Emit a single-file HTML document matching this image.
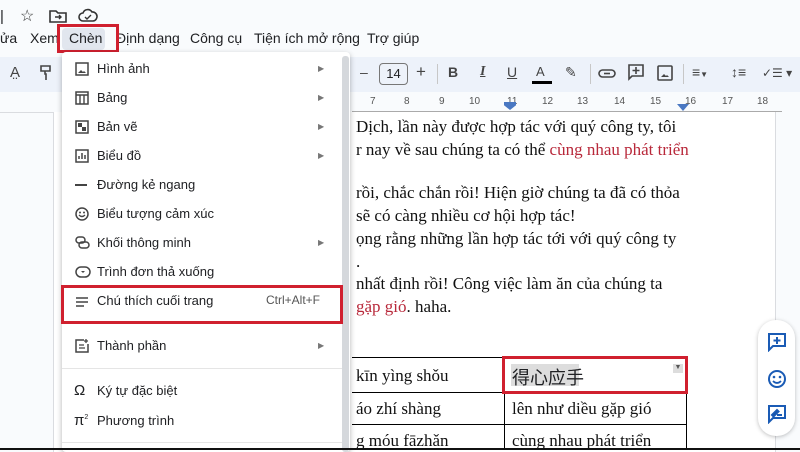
<!DOCTYPE html>
<html><head><meta charset="utf-8"><style>
*{margin:0;padding:0;box-sizing:border-box}
body{width:800px;height:450px;overflow:hidden;position:relative;background:#f9fbfd;font-family:"Liberation Sans",sans-serif;color:#202124}
.a{position:absolute}
.top{left:0;top:0;width:800px;height:57px;background:#f9fbfd}
.tb{left:0;top:57px;width:800px;height:35px;background:#edf2fa}
.menu{font-size:14px;top:30px;color:#202124}
.page{left:53px;top:112px;width:723px;height:340px;background:#fff;border-left:1px solid #dadce0;border-right:1px solid #dadce0}
.doc{font-family:"Liberation Serif",serif;font-size:17px;color:#111;left:356px;white-space:nowrap}
.red{color:#b8283a}
.dd{left:62px;top:52px;width:288px;height:400px;background:#fff;box-shadow:0 2px 6px rgba(0,0,0,.3);border-radius:4px}
.it{position:absolute;left:35px;font-size:13px;color:#202124}
.ic{position:absolute;left:13px;width:14px;height:14px}
.arr{position:absolute;left:256px;font-size:8px;color:#777}
.sep{position:absolute;left:0;width:280px;height:1px;background:#e5e5e5}
.rb{position:absolute;border:3px solid #d0202f}
.tbi{position:absolute;top:64px;font-size:14px;color:#444;font-weight:bold}
.rul{left:352px;top:98px;width:430px;height:14px;font-size:10px;color:#555}
</style></head><body>
<div class="a top"></div>
<div class="a" style="left:0;top:8px;font-size:15px">|</div>
<div class="a" style="left:20px;top:6px;font-size:16px;color:#333">☆</div>
<svg class="a" style="left:49px;top:9px" width="18" height="14"><path d="M1 2h6l2 2h8v9H1z" fill="none" stroke="#333" stroke-width="1.6"/><path d="M6 8h6M10 6l2 2-2 2" fill="none" stroke="#333" stroke-width="1.4"/></svg>
<svg class="a" style="left:78px;top:8px" width="20" height="15"><path d="M5 13a4 4 0 010-8 5 5 0 019-1 4 4 0 011 9z" fill="none" stroke="#333" stroke-width="1.6"/><path d="M7 9l2 2 4-4" fill="none" stroke="#333" stroke-width="1.4"/></svg>
<div class="a menu" style="left:0">ửa</div>
<div class="a menu" style="left:30px">Xem</div>
<div class="a" style="left:62px;top:28px;width:43px;height:22px;background:#e1e6ee;border-radius:4px"></div>
<div class="a menu" style="left:69px">Chèn</div>
<div class="a menu" style="left:116px">Định dạng</div>
<div class="a menu" style="left:190px">Công cụ</div>
<div class="a menu" style="left:254px">Tiện ích mở rộng</div>
<div class="a menu" style="left:367px">Trợ giúp</div>
<div class="rb" style="left:57px;top:24px;width:62px;height:29px"></div>
<div class="a tb"></div>
<div class="a" style="left:10px;top:64px;font-size:15px;color:#444">A̤</div>
<svg class="a" style="left:39px;top:64px" width="14" height="18"><path d="M2 2h9v5H2zM6 7v3h1v6" fill="none" stroke="#444" stroke-width="1.6"/></svg>
<div class="a page"></div>
<div class="a" style="left:0;top:112px;width:53px;height:1px;background:#dadce0"></div>
<div class="tbi" style="left:360px;font-weight:normal">–</div>
<div class="a" style="left:379px;top:63px;width:29px;height:22px;border:1px solid #777;border-radius:4px;font-size:13px;text-align:center;line-height:20px">14</div>
<div class="tbi" style="left:416px;font-weight:normal;font-size:17px;top:62px">+</div>
<div class="a" style="left:437px;top:64px;width:1px;height:20px;background:#c7c7c7"></div>
<div class="tbi" style="left:448px">B</div>
<div class="tbi" style="left:480px;font-style:italic;text-decoration:underline;font-family:'Liberation Serif'">I</div>
<div class="tbi" style="left:507px;font-weight:normal;text-decoration:underline">U</div>
<div class="tbi" style="left:536px;font-weight:normal;font-size:13px">A</div>
<div class="a" style="left:532px;top:81px;width:20px;height:3px;background:#000"></div>
<div class="tbi" style="left:565px;font-weight:normal">✎</div>
<div class="a" style="left:590px;top:64px;width:1px;height:20px;background:#c7c7c7"></div>
<svg class="a" style="left:598px;top:66px" width="18" height="14"><rect x="1" y="4" width="16" height="7" rx="3.5" fill="none" stroke="#444" stroke-width="1.6"/><path d="M6 7.5h6" stroke="#444" stroke-width="1.6"/></svg>
<svg class="a" style="left:627px;top:63px" width="18" height="18"><path d="M2 2h14v11H5l-3 3z" fill="none" stroke="#444" stroke-width="1.6"/><path d="M9 4v7M5.5 7.5h7" stroke="#444" stroke-width="1.6"/></svg>
<svg class="a" style="left:657px;top:65px" width="16" height="16"><rect x="1" y="1" width="14" height="14" rx="1" fill="none" stroke="#444" stroke-width="1.6"/><path d="M4 12l3-3 2 2 1-1 2 2z" fill="#444"/></svg>
<div class="a" style="left:683px;top:64px;width:1px;height:20px;background:#c7c7c7"></div>
<div class="tbi" style="left:692px;font-weight:normal">≡<span style="font-size:8px">▼</span></div>
<div class="tbi" style="left:731px;font-weight:normal">↕≡</div>
<div class="tbi" style="left:762px;font-weight:normal;font-size:12px;top:66px">✓☰ ▾</div>
<div class="a rul">
<div class="a" style="left:0;top:13px;width:430px;height:1px;background:#aaa"></div>
<span class="a" style="left:18px;top:-2px">7</span><span class="a" style="left:52px;top:-2px">8</span><span class="a" style="left:87px;top:-2px">9</span><span class="a" style="left:117px;top:-2px">10</span><span class="a" style="left:155px;top:-2px">11</span><span class="a" style="left:190px;top:-2px">12</span><span class="a" style="left:225px;top:-2px">13</span><span class="a" style="left:262px;top:-2px">14</span><span class="a" style="left:298px;top:-2px">15</span><span class="a" style="left:333px;top:-2px">16</span><span class="a" style="left:370px;top:-2px">17</span><span class="a" style="left:405px;top:-2px">18</span>
<div class="a" style="left:152px;top:4px;width:12px;height:8px;background:#4a78c2;clip-path:polygon(0 0,100% 0,100% 40%,50% 100%,0 40%)"></div>
<div class="a" style="left:325px;top:6px;width:12px;height:7px;background:#4a78c2;clip-path:polygon(0 0,100% 0,50% 100%)"></div>
</div>
<div class="a doc" style="top:117px">Dịch, lần này được hợp tác với quý công ty, tôi</div>
<div class="a doc" style="top:140px">r nay về sau chúng ta có thể <span class="red">cùng nhau phát triển</span></div>
<div class="a doc" style="top:183px">rồi, chắc chắn rồi! Hiện giờ chúng ta đã có thỏa</div>
<div class="a doc" style="top:206px">sẽ có càng nhiều cơ hội hợp tác!</div>
<div class="a doc" style="top:229px">ọng rằng những lần hợp tác tới với quý công ty</div>
<div class="a doc" style="top:252px">.</div>
<div class="a doc" style="top:274px">nhất định rồi! Công việc làm ăn của chúng ta</div>
<div class="a doc" style="top:297px"><span class="red">gặp gió</span>. haha.</div>
<div class="a" style="left:352px;top:357px;width:335px;height:1px;background:#000"></div>
<div class="a" style="left:352px;top:392px;width:335px;height:1px;background:#000"></div>
<div class="a" style="left:352px;top:424px;width:335px;height:1px;background:#000"></div>
<div class="a" style="left:504px;top:357px;width:1px;height:93px;background:#000"></div>
<div class="a" style="left:686px;top:357px;width:1px;height:93px;background:#000"></div>
<div class="a doc" style="top:366px">kīn yìng shǒu</div>
<div class="a doc" style="top:399px">áo zhí shàng</div>
<div class="a doc" style="top:431px">g móu fāzhǎn</div>
<div class="a" style="left:511px;top:364px;width:68px;height:22px;background:#ddd"></div>
<div class="a" style="left:512px;top:364px;font-size:18px;font-family:'Liberation Sans','Noto Sans CJK SC',sans-serif">得心应手</div>
<div class="a" style="left:673px;top:364px;width:10px;height:9px;background:#ddd;font-size:7px;text-align:center;color:#555">▼</div>
<div class="a doc" style="left:512px;top:399px">lên như diều gặp gió</div>
<div class="a doc" style="left:512px;top:431px">cùng nhau phát triển</div>
<div class="rb" style="left:502px;top:356px;width:186px;height:38px"></div>
<div class="a" style="left:758px;top:320px;width:37px;height:116px;background:#fff;border-radius:18px;box-shadow:0 1px 4px rgba(0,0,0,.25)"></div>
<svg class="a" style="left:767px;top:332px" width="20" height="20"><path d="M2 2h16v12H6l-4 4z" fill="none" stroke="#1a5bb5" stroke-width="2"/><path d="M10 5v7M6.5 8.5h7" stroke="#1a5bb5" stroke-width="2"/></svg>
<svg class="a" style="left:767px;top:369px" width="20" height="20"><circle cx="10" cy="10" r="8" fill="none" stroke="#1a5bb5" stroke-width="2"/><circle cx="7" cy="8" r="1.3" fill="#1a5bb5"/><circle cx="13" cy="8" r="1.3" fill="#1a5bb5"/><path d="M6 12q4 4 8 0" fill="none" stroke="#1a5bb5" stroke-width="1.8"/></svg>
<svg class="a" style="left:767px;top:404px" width="20" height="20"><path d="M2 2h16v12H6l-4 4z" fill="none" stroke="#1a5bb5" stroke-width="2"/><path d="M5 11l5-5 1.5 1.5-5 5zM10 11h5" stroke="#1a5bb5" stroke-width="2"/></svg>
<div class="a dd">
<div class="a" style="left:280px;top:4px;width:7px;height:396px;background:#d5d8dc;border-radius:3px"></div>
<svg class="ic" style="top:10px"><rect x="1" y="1" width="12" height="12" fill="none" stroke="#444" stroke-width="1.5"/><path d="M3 11l3-3 2 2 1-1 2 2z" fill="#444"/></svg><div class="it" style="top:9px">Hình ảnh</div><div class="arr" style="top:12px">▶</div>
<svg class="ic" style="top:39px"><rect x="1" y="1" width="12" height="12" fill="none" stroke="#444" stroke-width="1.5"/><path d="M1 4h12M5 4v9M9 4v9" stroke="#444" stroke-width="1.4"/></svg><div class="it" style="top:38px">Bảng</div><div class="arr" style="top:41px">▶</div>
<svg class="ic" style="top:68px"><rect x="1" y="1" width="12" height="12" fill="none" stroke="#444" stroke-width="1.5"/><rect x="3" y="3" width="4" height="4" fill="#444"/><rect x="7" y="7" width="4" height="4" fill="#444"/></svg><div class="it" style="top:67px">Bản vẽ</div><div class="arr" style="top:70px">▶</div>
<svg class="ic" style="top:97px"><rect x="1" y="1" width="12" height="12" fill="none" stroke="#444" stroke-width="1.5"/><path d="M4 10V7M7 10V4M10 10V6" stroke="#444" stroke-width="1.5"/></svg><div class="it" style="top:96px">Biểu đồ</div><div class="arr" style="top:99px">▶</div>
<div class="ic" style="top:132px;height:2px;width:12px;background:#444"></div><div class="it" style="top:125px">Đường kẻ ngang</div>
<svg class="ic" style="top:155px"><circle cx="7" cy="7" r="6" fill="none" stroke="#444" stroke-width="1.5"/><path d="M4 8q3 3 6 0" fill="none" stroke="#444" stroke-width="1.3"/><circle cx="5" cy="5.5" r="1" fill="#444"/><circle cx="9" cy="5.5" r="1" fill="#444"/></svg><div class="it" style="top:154px">Biểu tượng cảm xúc</div>
<svg class="ic" style="top:184px;width:16px"><rect x="1" y="1" width="9" height="6" rx="3" fill="none" stroke="#444" stroke-width="1.5"/><rect x="4" y="6" width="10" height="6" rx="3" fill="none" stroke="#444" stroke-width="1.5"/></svg><div class="it" style="top:183px">Khối thông minh</div><div class="arr" style="top:186px">▶</div>
<svg class="ic" style="top:213px;width:16px"><rect x="1" y="2" width="14" height="10" rx="5" fill="none" stroke="#444" stroke-width="1.5"/><path d="M6 6l2 2 2-2" fill="#444"/></svg><div class="it" style="top:212px">Trình đơn thả xuống</div>
<svg class="ic" style="top:243px"><path d="M1 3h12M1 7h12M1 11h8" stroke="#444" stroke-width="1.5"/></svg><div class="it" style="top:241px">Chú thích cuối trang</div><div class="it" style="top:241px;left:204px;color:#555;font-size:12px">Ctrl+Alt+F</div>
<svg class="ic" style="top:287px"><path d="M9 1H1v12h12V5" fill="none" stroke="#444" stroke-width="1.5"/><path d="M4 6h5M4 9h6M11 0v4M9 2h4" stroke="#444" stroke-width="1.3"/></svg><div class="it" style="top:286px">Thành phần</div><div class="arr" style="top:289px">▶</div>
<div class="sep" style="top:316px"></div>
<div class="it" style="top:330px;left:12px;font-size:15px">Ω</div><div class="it" style="top:331px">Ký tự đặc biệt</div>
<div class="it" style="top:360px;left:12px;font-size:15px">π<sup style="font-size:7px">2</sup></div><div class="it" style="top:361px">Phương trình</div>
<div class="sep" style="top:390px"></div>
</div>
<div class="rb" style="left:61px;top:285px;width:282px;height:39px"></div>
<div class="a" style="left:0;top:448px;width:800px;height:2px;background:#111"></div>
</body></html>
